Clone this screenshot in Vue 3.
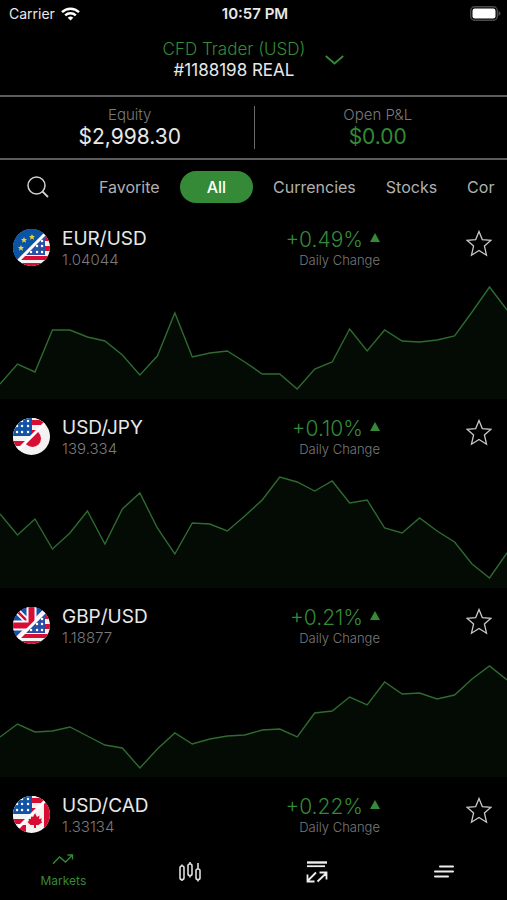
<template>
  <div class="app">
    <header class="status">
      <div class="carrier">
        <span>Carrier</span>
        <svg width="19" height="14" viewBox="0 0 19 14" fill="none" stroke="#fff" stroke-width="2.4">
          <path d="M1 5.2a12.2 12.2 0 0 1 17 0" />
          <path d="M4.2 8.4a7.6 7.6 0 0 1 10.6 0" />
          <path d="M9.5 13.6 6.7 10.8a4 4 0 0 1 5.6 0z" fill="#fff" stroke="none" />
        </svg>
      </div>
      <span class="time">10:57 PM</span>
      <svg class="battery" width="31" height="15" viewBox="0 0 31 15">
        <rect x="0.7" y="0.7" width="26.6" height="13.6" rx="4" fill="none" stroke="#4b4b4b" stroke-width="1.4" />
        <rect x="2.5" y="2.5" width="23" height="10" rx="2.2" fill="#fff" />
        <path d="M28.5 5v5c1.3-.4 2-1.3 2-2.500s-.7-2.1-2-2.5z" fill="#4b4b4b" />
      </svg>
    </header>

    <button class="account" type="button">
      <span class="account-text">
        <span class="account-name">CFD Trader (USD)</span>
        <span class="account-id">#1188198 REAL</span>
      </span>
      <svg width="19" height="10" viewBox="0 0 19 10" fill="none" stroke="#348a36" stroke-width="1.8">
        <path d="M0.8 1 9.5 8.5 18.2 1" />
      </svg>
    </button>

    <section class="summary">
      <div class="summary-item">
        <span class="summary-label">Equity</span>
        <span class="summary-value">$2,998.30</span>
      </div>
      <div class="summary-item">
        <span class="summary-label">Open P&amp;L</span>
        <span class="summary-value green">$0.00</span>
      </div>
    </section>

    <nav class="filters">
      <button class="search" type="button" aria-label="Search">
        <svg width="22" height="22" viewBox="0 0 22 22" fill="none" stroke="#d0d0d0" stroke-width="1.5">
          <circle cx="9.5" cy="9.5" r="8.5" />
          <path d="M15.5 15.5 21 21" stroke-width="1.8" />
        </svg>
      </button>
      <div class="tabs">
        <button
          v-for="tab in tabs"
          :key="tab"
          type="button"
          class="tab"
          :class="{ active: tab === activeTab }"
          @click="activeTab = tab"
        >{{ tab }}</button>
      </div>
    </nav>

    <main class="list">
      <article v-for="item in markets" :key="item.symbol" class="market">
        <div class="market-head">
          <svg class="flag" width="37" height="37" viewBox="0 0 37 37">
            <use :href="'#flag-' + item.quote + '-back'" />
            <g clip-path="url(#half)">
              <use :href="'#flag-' + item.base" />
            </g>
            <path d="M0 37 37 0" stroke="#fff" stroke-width="3" />
          </svg>
          <div class="names">
            <span class="symbol">{{ item.symbol }}</span>
            <span class="price">{{ item.price }}</span>
          </div>
          <div class="change">
            <span class="percent">
              {{ item.change }}
              <svg class="arrow" width="10" height="9" viewBox="0 0 10 9"><path d="M5 0 10 9H0z" fill="#348a36" /></svg>
            </span>
            <span class="caption">Daily Change</span>
          </div>
          <button
            class="star"
            type="button"
            :aria-label="'Add ' + item.symbol + ' to favorites'"
            @click="item.favorite = !item.favorite"
          >
            <svg width="26" height="27" viewBox="0 0 26 27" :fill="item.favorite ? '#c8c8c8' : 'none'" stroke="#c8c8c8" stroke-width="1.3">
              <path d="M13 1.5 16.3 9.6 25 10.3 18.4 16 20.5 25.2 13 20.4 5.5 25.2 7.6 16 1 10.3 9.7 9.6z" />
            </svg>
          </button>
        </div>
        <svg v-if="item.points" class="chart" viewBox="0 0 29 119" preserveAspectRatio="none">
          <path :d="linePath(item.points) + 'L29 119L0 119Z'" fill="#040a04" />
          <path :d="linePath(item.points)" fill="none" stroke="#2d6b30" stroke-width="1.4" vector-effect="non-scaling-stroke" />
        </svg>
      </article>
    </main>

    <nav class="bottom">
      <a href="#markets" class="bottom-item current">
        <svg width="22" height="11" viewBox="0 0 22 11" fill="none" stroke="#348a36" stroke-width="1.3">
          <path d="M1 9.8 7.5 3 13.5 8 20 1.5M15.5 1H20.5V5.5" />
        </svg>
        <span>Markets</span>
      </a>
      <a href="#charts" class="bottom-item" aria-label="Charts">
        <svg width="22" height="20" viewBox="0 0 22 20" fill="none" stroke="#ddd" stroke-width="1.6">
          <rect x="1" y="4" width="4" height="13.5" rx="1.8" />
          <rect x="9" y="2" width="4" height="11.5" rx="1.8" />
          <rect x="17" y="7" width="4" height="10.5" rx="1.8" />
          <path d="M3 2.5V4M3 17.5V19M11 0V2M11 13.5V15.5M19 1V7M19 17.5V19.5" />
        </svg>
      </a>
      <a href="#trades" class="bottom-item" aria-label="Trades">
        <svg width="22" height="22" viewBox="0 0 22 22" fill="none" stroke="#eee" stroke-width="1.8">
          <path d="M1 1.500H21" stroke-width="2.4" />
          <path d="M1 5.2H19" />
          <path d="M10 11.5 1.5 20M1.5 13.5V20.500H8.5M11.5 20.5 20.5 12M13.5 11.500H20.5V18.5" />
        </svg>
      </a>
      <a href="#menu" class="bottom-item" aria-label="Menu">
        <svg width="22" height="13" viewBox="0 0 22 13" stroke="#eee" stroke-width="2" stroke-linecap="round">
          <path d="M7 1.5H20M2 6.5H20M2 11.5H15" />
        </svg>
      </a>
    </nav>

    <!-- flag artwork shared by the rows -->
    <svg class="defs" width="0" height="0" aria-hidden="true">
      <defs>
        <clipPath id="half"><path d="M0 0H37L0 37z" /></clipPath>
        <g id="flag-usd">
          <path d="M0 0H37V37H0z" fill="#f5f2f2" />
          <path d="M18 2H37V7H18zM18 12H37V17H18zM0 23H37V28H0zM0 32H37V37H0z" fill="#d80d34" />
          <path d="M0 0H19V18H0z" fill="#1253a8" />
          <path d="M9 3h.1M15 3h.1M4 8h.1M9 8h.1M15 8h.1M4 14h.1M9 14h.1M15 14h.1" stroke="#fff" stroke-width="2.4" stroke-linecap="round" />
        </g>
        <g id="flag-usd-back">
          <path d="M0 0H37V37H0z" fill="#f5f2f2" />
          <path d="M32 7H37V12H32zM32 17H37V22H32zM0 27H37V31H0zM0 34H37V37H0z" fill="#d80d34" />
          <path d="M0 0H32V26H0z" fill="#2a50a4" />
          <path d="M29 12h.1M24 17h.1M29 17h.1M18 23h.1M24 23h.1M29 23h.1" stroke="#fff" stroke-width="2.4" stroke-linecap="round" />
        </g>
        <path id="eu-star" d="M0-3 .9-1H3L1.400.4 2 2.700 0 1.400-2 2.700-1.400.4-3-1H-.9z" fill="#e8d23c" />
        <g id="flag-eur">
          <path d="M0 0H37V37H0z" fill="#0b53a5" />
          <use href="#eu-star" x="19" y="8" />
          <use href="#eu-star" x="11" y="11" />
          <use href="#eu-star" x="8" y="19" />
        </g>
        <g id="flag-gbp">
          <path d="M0 0H37V37H0z" fill="#1253a8" />
          <path d="M0 0 37 37M37 0 0 37" stroke="#fff" stroke-width="6" />
          <path d="M0 0 37 37M37 0 0 37" stroke="#d80d34" stroke-width="2.5" />
          <path d="M18.5 0V37M0 18.500H37" stroke="#fff" stroke-width="10" />
          <path d="M18.5 0V37M0 18.500H37" stroke="#d80d34" stroke-width="6" />
        </g>
        <g id="flag-jpy-back">
          <path d="M0 0H37V37H0z" fill="#f3f1f1" />
          <circle cx="19.5" cy="20.5" r="8.5" fill="#d80d34" />
        </g>
        <g id="flag-cad-back">
          <path d="M0 0H37V37H0z" fill="#f5f2f2" />
          <path d="M31 0H37V37H31zM0 29H13V37H0z" fill="#d80d34" />
          <path d="M22 17 24 21 26.5 19.5 26 23 29 22.5 28 25 29.5 26 25.5 29 23 29V32H21V29L17.5 29 14.5 26 16 25 15 22.5 18 23 17.5 19.5 20 21z" fill="#d80d34" />
        </g>
      </defs>
    </svg>
  </div>
</template>

<script setup>
import { ref } from 'vue'

const tabs = ['Favorite', 'All', 'Currencies', 'Stocks', 'Cor']
const activeTab = ref('All')

const markets = ref([
  {
    symbol: 'EUR/USD',
    base: 'eur',
    quote: 'usd',
    price: '1.04044',
    change: '+0.49%',
    favorite: false,
    points: [104, 84, 92, 50, 50, 57, 61, 75, 95, 76, 33, 77, 73, 71, 82, 94, 94, 109, 89, 82, 49, 71, 50, 61, 62, 60, 56, 32, 7, 30]
  },
  {
    symbol: 'USD/JPY',
    base: 'usd',
    quote: 'jpy',
    price: '139.334',
    change: '+0.10%',
    favorite: false,
    points: [45, 66, 50, 80, 64, 42, 75, 40, 24, 59, 85, 54, 55, 62, 47, 31, 8, 13, 22, 12, 34, 31, 59, 64, 49, 62, 73, 95, 109, 84]
  },
  {
    symbol: 'GBP/USD',
    base: 'gbp',
    quote: 'usd',
    price: '1.18877',
    change: '+0.21%',
    favorite: false,
    points: [79, 66, 74, 73, 69, 78, 87, 90, 110, 91, 75, 86, 81, 78, 77, 72, 71, 79, 55, 53, 39, 47, 24, 36, 35, 41, 37, 21, 8, 22]
  },
  {
    symbol: 'USD/CAD',
    base: 'usd',
    quote: 'cad',
    price: '1.33134',
    change: '+0.22%',
    favorite: false
  }
])

const linePath = (points) => 'M' + points.map((y, x) => `${x} ${y}`).join('L')
</script>

<style>
body {
  margin: 0;
  background: #000;
}
</style>

<style scoped>
.app {
  display: flex;
  flex-direction: column;
  height: 100vh;
  background: #000;
  color: #e8e8e8;
  font-family: Inter, "Liberation Sans", sans-serif;
  font-weight: 400;
}

button {
  padding: 0;
  border: 0;
  background: none;
  color: inherit;
  font: inherit;
  cursor: pointer;
}

svg {
  display: block;
  flex: none;
}

.status {
  display: grid;
  grid-template-columns: 1fr auto 1fr;
  align-items: center;
  height: 27px;
  padding: 0 6px 0 9px;
  font-size: 14px;
}

.carrier {
  display: flex;
  align-items: center;
  gap: 6px;
}

.time {
  font-size: 15px;
  font-weight: 600;
}

.battery {
  justify-self: end;
}

.account {
  display: flex;
  justify-content: center;
  align-items: center;
  gap: 20px;
  height: 68px;
  padding-bottom: 3px;
}

.account-text {
  display: flex;
  flex-direction: column;
  align-items: center;
  font-size: 17px;
  line-height: 21px;
}

.account-name {
  font-weight: 300;
  color: #348a36;
}

.summary {
  display: grid;
  grid-template-columns: 1fr 1fr;
  padding: 9px 6px;
  border-top: 2px solid #5c5c5c;
  border-bottom: 2px solid #5c5c5c;
}

.summary-item {
  display: flex;
  flex-direction: column;
  align-items: center;
  height: 43px;
}

.summary-item + .summary-item {
  border-left: 1px solid #6a6a6a;
}

.summary-label {
  font-size: 15px;
  font-weight: 300;
  line-height: 18px;
  color: #7a7a7a;
}

.summary-value {
  font-size: 21px;
  line-height: 25px;
}

.green {
  color: #348a36;
}

.filters {
  display: flex;
  align-items: center;
  gap: 35px;
  height: 50px;
  padding: 3px 12px 0 27px;
  box-sizing: border-box;
}

.tabs {
  display: flex;
  flex: 1;
  align-items: center;
  min-width: 0;
  overflow: hidden;
}

.tab {
  flex: none;
  height: 32px;
  padding: 0 15px;
  font-size: 16px;
  color: #b0b0b0;
}

.tab:last-child {
  padding-right: 0;
}

.tab.active {
  margin: 0 5px;
  padding: 0 27px;
  border-radius: 16px;
  background: #348a36;
  color: #fff;
  font-weight: 500;
}

.list {
  flex: 1;
  min-height: 0;
  overflow: hidden;
}

.market-head {
  display: grid;
  grid-template-columns: 37px 1fr auto 112px;
  align-items: center;
  height: 70px;
  padding: 4px 15px 0 13px;
  box-sizing: border-box;
}

.flag {
  border-radius: 50%;
}

.names,
.change {
  display: flex;
  flex-direction: column;
}

.names {
  padding-left: 12px;
}

.symbol,
.percent {
  font-size: 19px;
  line-height: 24px;
}

.price,
.caption {
  font-weight: 300;
  line-height: 17px;
  color: #7a7a7a;
}

.price {
  font-size: 15px;
}

.change {
  align-items: flex-end;
  padding-top: 2px;
}

.percent {
  display: flex;
  align-items: center;
  gap: 7px;
  font-size: 21px;
  font-weight: 300;
  color: #348a36;
}

.arrow {
  margin-bottom: 5px;
}

.caption {
  font-size: 13px;
}

.star {
  justify-self: end;
  padding-bottom: 8px;
}

.chart {
  width: 100%;
  height: 119px;
}

.bottom {
  display: grid;
  grid-template-columns: repeat(4, 1fr);
  height: 60px;
}

.bottom-item {
  display: flex;
  flex-direction: column;
  align-items: center;
  justify-content: center;
  gap: 8px;
  padding-top: 3px;
  font-size: 12px;
  line-height: 16px;
  color: #ddd;
  text-decoration: none;
}

.current {
  color: #348a36;
}

.defs {
  position: absolute;
}
</style>
